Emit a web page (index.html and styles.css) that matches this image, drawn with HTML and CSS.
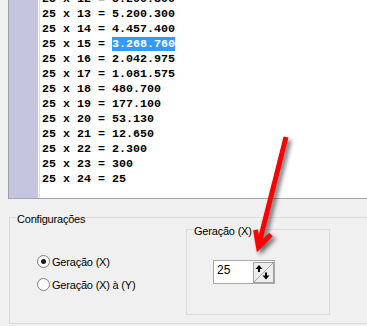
FILE: index.html
```html
<!DOCTYPE html>
<html lang="pt">
<head>
    <meta charset="UTF-8">
    <meta name="viewport" content="width=device-width, initial-scale=1.0">
    <title>Gerações</title>
    <link rel="stylesheet" href="styles.css">
</head>
<body>
    <div class="window">
        <!-- Result list -->
        <div class="memo">
            <div class="gutter"></div>
            <div class="lines">
                <div class="line">25 x 12 = 5.200.300</div>
                <div class="line">25 x 13 = 5.200.300</div>
                <div class="line">25 x 14 = 4.457.400</div>
                <div class="line">25 x 15 = <span class="selected">3.268.760</span></div>
                <div class="line">25 x 16 = 2.042.975</div>
                <div class="line">25 x 17 = 1.081.575</div>
                <div class="line">25 x 18 = 480.700</div>
                <div class="line">25 x 19 = 177.100</div>
                <div class="line">25 x 20 = 53.130</div>
                <div class="line">25 x 21 = 12.650</div>
                <div class="line">25 x 22 = 2.300</div>
                <div class="line">25 x 23 = 300</div>
                <div class="line">25 x 24 = 25</div>
            </div>
        </div>

        <!-- Settings -->
        <div class="panel">
            <div class="group outer">
                <div class="legend">Configurações</div>
                <div class="group-body">
                    <div class="options">
                        <label class="option"><span class="radio checked"></span>Geração (X)</label>
                        <label class="option"><span class="radio"></span>Geração (X) à (Y)</label>
                    </div>
                    <div class="group inner">
                        <div class="legend">Geração (X)</div>
                        <div class="spin">
                            <span class="spin-value">25</span>
                            <svg class="spin-btn" width="21" height="21" viewBox="0 0 21 21">
                                <rect x="0.5" y="0.5" width="20" height="20" fill="#ededed" stroke="#a3a3a3"/>
                                <line x1="1" y1="20" x2="20" y2="1" stroke="#a8a8a8" stroke-width="1"/>
                                <polygon points="6,3 9.5,7 7,7 7,10 5,10 5,7 2.5,7" fill="#000"/>
                                <polygon points="13,17.5 16.5,13.5 14,13.5 14,10.5 12,10.5 12,13.5 9.5,13.5" fill="#000"/>
                            </svg>
                        </div>
                    </div>
                </div>
            </div>
        </div>

        <!-- Red pointer drawn over the screenshot -->
        <svg class="pointer" width="367" height="326" viewBox="0 0 367 326">
            <g fill="none" stroke="#ff0000" stroke-width="5">
                <line x1="286" y1="137" x2="258.5" y2="246"/>
                <polyline points="255.5,230 258.5,247 271,234.5" stroke-linejoin="miter"/>
            </g>
        </svg>
    </div>
</body>
</html>
```

FILE: styles.css
```css
body {
    margin: 0;
    padding: 0;
    background-color: #f0f0f0;
    font-family: "Liberation Sans", Arial, sans-serif;
    font-size: 11px;
    color: #000;
}

.window {
    position: relative;
    width: 367px;
    height: 326px;
    overflow: hidden;
}

/* List of results */
.memo {
    display: flex;
    height: 198px;
    margin-left: 8px;
    background-color: #fff;
    border-left: 1px solid #a0a0a0;
    border-bottom: 1px solid #a4a4b4;
    overflow: hidden;
}

.gutter {
    width: 29px;
    flex-shrink: 0;
    background-color: #c5c5df;
    border-right: 1px solid #fff;
    box-shadow: 1px 0 0 #dcdcee;
}

.lines {
    margin-top: -8px;
    padding-left: 3px;
    font-family: "Liberation Mono", "Courier New", monospace;
    font-size: 11.67px;
    font-weight: bold;
    line-height: 15px;
}

.line {
    white-space: pre;
}

.selected {
    background-color: #3399ff;
    color: #fff;
}

/* Settings panel */
.panel {
    padding-left: 9px;
}

.group {
    box-sizing: border-box;
    border: 1px solid #dcdcdc;
}

.outer {
    margin-top: 18px;
    width: 365px;
    height: 107px;
}

.legend {
    width: max-content;
    margin: -5px 0 0 6px;
    padding: 0 1px;
    line-height: 13px;
    background-color: #f0f0f0;
    letter-spacing: -0.2px;
}

.group-body {
    display: grid;
    grid-template-columns: 176px 144px;
}

.options {
    display: flex;
    flex-direction: column;
    gap: 10px;
    padding: 29px 0 0 27px;
}

.option {
    display: flex;
    align-items: center;
    gap: 2px;
    height: 13px;
    letter-spacing: -0.2px;
}

.radio {
    box-sizing: border-box;
    width: 13px;
    height: 13px;
    border: 1px solid #7e7e7e;
    border-radius: 50%;
    background-color: #fff;
    display: flex;
    align-items: center;
    justify-content: center;
}

.radio.checked::after {
    content: "";
    width: 5px;
    height: 5px;
    border-radius: 50%;
    background-color: #1a1a1a;
}

.inner {
    margin-top: 3px;
    height: 86px;
}

.spin {
    box-sizing: border-box;
    display: flex;
    align-items: center;
    justify-content: space-between;
    width: 62px;
    height: 24px;
    margin: 22px 0 0 26px;
    padding: 0 0 0 3px;
    background-color: #fff;
    border: 1px solid #a8a8a8;
}

.spin-value {
    font-size: 12px;
    margin-top: -4px;
}

.spin-btn {
    display: block;
}

/* Annotation arrow */
.pointer {
    position: absolute;
    left: 0;
    top: 0;
    pointer-events: none;
    filter: drop-shadow(3px 3px 2px rgba(0, 0, 0, 0.55));
}
```
